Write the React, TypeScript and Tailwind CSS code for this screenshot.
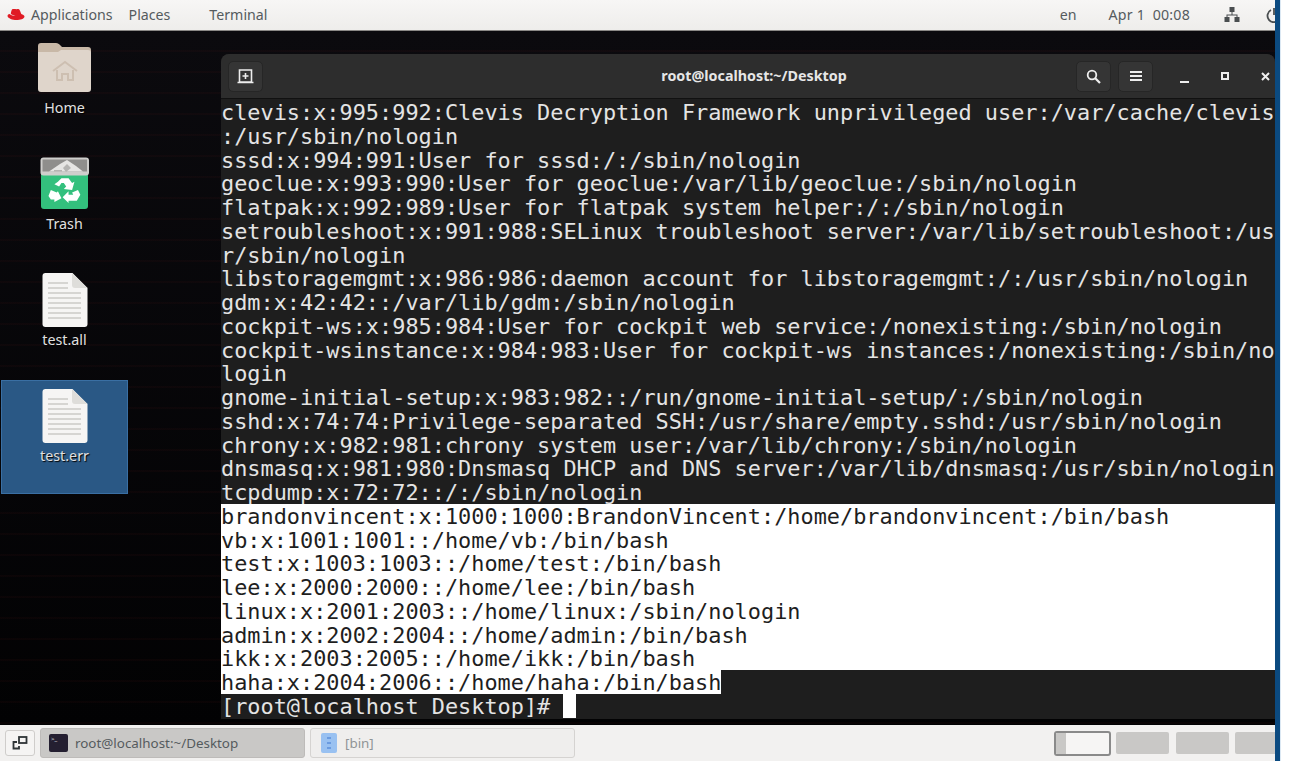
import React from "react";

const normal = [
  "clevis:x:995:992:Clevis Decryption Framework unprivileged user:/var/cache/clevis",
  ":/usr/sbin/nologin",
  "sssd:x:994:991:User for sssd:/:/sbin/nologin",
  "geoclue:x:993:990:User for geoclue:/var/lib/geoclue:/sbin/nologin",
  "flatpak:x:992:989:User for flatpak system helper:/:/sbin/nologin",
  "setroubleshoot:x:991:988:SELinux troubleshoot server:/var/lib/setroubleshoot:/us",
  "r/sbin/nologin",
  "libstoragemgmt:x:986:986:daemon account for libstoragemgmt:/:/usr/sbin/nologin",
  "gdm:x:42:42::/var/lib/gdm:/sbin/nologin",
  "cockpit-ws:x:985:984:User for cockpit web service:/nonexisting:/sbin/nologin",
  "cockpit-wsinstance:x:984:983:User for cockpit-ws instances:/nonexisting:/sbin/no",
  "login",
  "gnome-initial-setup:x:983:982::/run/gnome-initial-setup/:/sbin/nologin",
  "sshd:x:74:74:Privilege-separated SSH:/usr/share/empty.sshd:/usr/sbin/nologin",
  "chrony:x:982:981:chrony system user:/var/lib/chrony:/sbin/nologin",
  "dnsmasq:x:981:980:Dnsmasq DHCP and DNS server:/var/lib/dnsmasq:/usr/sbin/nologin",
  "tcpdump:x:72:72::/:/sbin/nologin",
];
const selected = [
  "brandonvincent:x:1000:1000:BrandonVincent:/home/brandonvincent:/bin/bash",
  "vb:x:1001:1001::/home/vb:/bin/bash",
  "test:x:1003:1003::/home/test:/bin/bash",
  "lee:x:2000:2000::/home/lee:/bin/bash",
  "linux:x:2001:2003::/home/linux:/sbin/nologin",
  "admin:x:2002:2004::/home/admin:/bin/bash",
  "ikk:x:2003:2005::/home/ikk:/bin/bash",
];

function FileIcon() {
  return (
    <svg width="46" height="54" viewBox="0 0 46 54">
      <path d="M3 0H30L45 15V51a3 3 0 0 1-3 3H3a3 3 0 0 1-3-3V3a3 3 0 0 1 3-3Z" fill="#f6f5f4" transform="translate(0.5 0)" />
      <path d="M30 0L45.5 15H33a3 3 0 0 1-3-3Z" fill="#deddda" />
      <g fill="#d6d5d2">
        <rect x="6" y="9" width="20" height="2" />
        <rect x="6" y="14" width="20" height="2" />
        <rect x="6" y="19" width="33" height="2" />
        <rect x="6" y="24" width="33" height="2" />
        <rect x="6" y="29" width="33" height="2" />
        <rect x="6" y="34" width="33" height="2" />
        <rect x="6" y="39" width="33" height="2" />
        <rect x="6" y="44" width="33" height="2" />
      </g>
    </svg>
  );
}

function HomeIcon() {
  return (
    <svg className="mb-[2px]" width="54" height="50" viewBox="0 0 54 50">
      <path d="M0 3a3 3 0 0 1 3-3H18c2 0 3 1 4 2l2 2H50a3 3 0 0 1 3 3V14H0Z" fill="#c8b8a7" />
      <path d="M0 9H20l3-2H50a3 3 0 0 1 3 3V46a3 3 0 0 1-3 3H3a3 3 0 0 1-3-3Z" fill="#dfd5cb" />
      <path d="M15 28L27 19L39 28M19 27V37H24V31H30V37H35V27" fill="none" stroke="#cdbfb1" strokeWidth="2" />
    </svg>
  );
}

function TrashIcon() {
  return (
    <svg className="mb-[2px]" width="50" height="52" viewBox="0 0 50 52">
      <rect x="1" y="14" width="47" height="38" rx="3" fill="#33c07d" />
      <rect x="0.5" y="0.5" width="48.500" height="18" rx="3" fill="#cfcecc" />
      <rect x="2.500" y="2.500" width="44.500" height="12" fill="#8f8e8c" />
      <path d="M9 14.500L20 7L27 3L36 9L43 14.500Z" fill="#e6e5e3" />
      <path d="M27 7l4 4-5 4-3-4ZM14 13h8v1.500h-8Z" fill="#b5b4b2" />
      <g fill="#fff" transform="translate(-4.500 -3.500) scale(1.180)">
        <path d="M19 24l3-3h6l3 4 2-1-2 7-7-1 2-2-2-3h-2l-2 3-4-2Z" />
        <path d="M13 31l5 2 1-1 3 6-6 3v-2h-3l-2-3Z" />
        <path d="M31 33l5-2 2 4-3 5h-7v2l-5-5 5-5v3h4Z" />
      </g>
    </svg>
  );
}

function DesktopItem({ label, children, selected }: { label: string; children: React.ReactNode; selected?: boolean }) {
  return (
    <div className={selected ? "flex h-[114px] w-[127px] flex-col items-center border border-[#3a6fa3] bg-[#2a5885] pt-[6px]" : "flex h-[114px] w-[127px] flex-col items-center border border-transparent pt-[6px]"}>
      <div className="flex h-[56px] items-end">{children}</div>
      <div className="mt-[4px] text-[14.300px] leading-[18px] text-[#e0e0e0] [text-shadow:1px_1px_1px_#000]">{label}</div>
    </div>
  );
}

function HeaderButton({ children }: { children: React.ReactNode }) {
  return (
    <div className="flex h-[31px] w-[35px] items-center justify-center rounded-[5px] border border-[#262626] bg-[#353535]">
      {children}
    </div>
  );
}

export default function App() {
  return (
    <div className="flex h-[761px] w-[1295px] overflow-hidden bg-white font-['Noto_Sans',sans-serif]">
      <div className="flex w-[1275px] flex-col">
        {/* Top bar */}
        <div className="flex h-[31px] shrink-0 items-center justify-between border-b border-[#8a8886] bg-gradient-to-b from-[#f7f6f5] to-[#eeedeb] text-[14.200px] text-[#555b5e]">
          <div className="flex items-center">
            <svg className="ml-[7px]" width="18" height="14" viewBox="0 0 18 14">
              <path d="M5 1.500C6 .5 8 1.200 9.500 1.200c1.600 0 2.300-.5 3 .5.7 1.200 1.200 3 1.800 4.200 1.500.5 3.200 1.300 3.200 2.600C17.500 11 13 12 9.500 12 5.500 12 1 10.500.5 8c0-1.300 1-2 2-2 .6.8 3 1.800 6 1.800C6 7 3.800 6.500 3.800 5.500 4 4 4.500 2.500 5 1.500Z" fill="#e01b24" />
            </svg>
            <span className="ml-[6px]">Applications</span>
            <span className="ml-[16px]">Places</span>
            <span className="ml-[39px]">Terminal</span>
          </div>
          <div className="flex items-center">
            <span>en</span>
            <span className="ml-[32px] whitespace-pre tracking-[0.2px]">Apr 1  00:08</span>
            <svg className="ml-[34px]" width="16" height="15" viewBox="0 0 16 15" fill="#4a4e50">
              <rect x="5.500" y="0" width="5" height="5" />
              <rect x="0.500" y="10" width="5" height="5" />
              <rect x="10.500" y="10" width="5" height="5" />
              <path d="M7.500 5h1v2.500H13.500V10h-1V8.500h-9V10h-1V7.500H7.500Z" />
            </svg>
            <svg className="ml-[26px] mr-[-7px]" width="16" height="16" viewBox="0 0 16 16" fill="none" stroke="#4a4e50" strokeWidth="1.800">
              <path d="M5 3a6.500 6.500 0 1 0 6 0M8 1v7" />
            </svg>
          </div>
        </div>

        {/* Desktop */}
        <div className="flex min-h-0 flex-1 bg-[repeating-linear-gradient(180deg,transparent_0px,transparent_19px,rgba(130,30,30,0.12)_20px,transparent_21px),linear-gradient(180deg,#0b0a0e,#020203)]">
          <div className="flex w-[221px] shrink-0 flex-col pl-[1px] pt-[1px]">
            <DesktopItem label="Home"><HomeIcon /></DesktopItem>
            <div className="h-[2px]" />
            <DesktopItem label="Trash"><TrashIcon /></DesktopItem>
            <div className="h-[2px]" />
            <DesktopItem label="test.all"><FileIcon /></DesktopItem>
            <div className="h-[2px]" />
            <DesktopItem label="test.err" selected><FileIcon /></DesktopItem>
          </div>

          {/* Terminal */}
          <div className="mt-[23px] mb-[6px] flex min-w-0 flex-1 flex-col overflow-hidden rounded-t-[8px] bg-[#1e1e1e]">
            <div className="grid h-[45px] shrink-0 grid-cols-[1fr_auto_1fr] items-center border-b border-[#111] bg-[#2d2d2d] pl-[7px]">
              <HeaderButton>
                <svg width="17" height="15" viewBox="0 0 17 15" fill="none" stroke="#eee" strokeWidth="1.600">
                  <path d="M2.500 1h12v12h-12ZM.500 13.500h16M8.500 4v6M5.500 7h6" />
                </svg>
              </HeaderButton>
              <span className="ml-[5px] text-[14.300px] font-bold text-[#e6e6e6]">root@localhost:~/Desktop</span>
              <div className="flex items-center justify-end">
                <HeaderButton>
                  <svg width="15" height="15" viewBox="0 0 15 15" fill="none" stroke="#eee" strokeWidth="1.800">
                    <circle cx="6" cy="6" r="4.300" />
                    <path d="M9 9l5 5" strokeWidth="2.200" />
                  </svg>
                </HeaderButton>
                <div className="w-[7px]" />
                <HeaderButton>
                  <svg width="12" height="10" viewBox="0 0 12 10" fill="#eee">
                    <rect y="0" width="12" height="2" />
                    <rect y="4" width="12" height="2" />
                    <rect y="8" width="12" height="2" />
                  </svg>
                </HeaderButton>
                <div className="ml-[27px] mt-[11px] h-[2px] w-[9px] bg-[#eee]" />
                <div className="ml-[32px] h-[8px] w-[8px] border-2 border-[#eee]" />
                <svg className="ml-[32px] mr-[5px]" width="9" height="9" viewBox="0 0 9 9" stroke="#eee" strokeWidth="2">
                  <path d="M1 1l7 7M8 1l-7 7" />
                </svg>
              </div>
            </div>
            <div className="min-h-0 flex-1 pt-[1px] font-['DejaVu_Sans_Mono',monospace] text-[21.880px] leading-[25.300px] whitespace-pre text-[#e4e4e4]">
              <div>
                {normal.map((l, i) => <div key={i} className="h-[23.760px]">{l}</div>)}
              </div>
              <div className="bg-white text-[#1e1e1e]">
                {selected.map((l, i) => <div key={i} className="h-[23.760px]">{l}</div>)}
              </div>
              <div className="h-[23.760px]">
                <span className="inline-block h-[23.760px] bg-white text-[#1e1e1e]">haha:x:2004:2006::/home/haha:/bin/bash</span>
              </div>
              <div className="flex h-[23.760px]">
                <span>[root@localhost Desktop]#</span>
                <span className="ml-[13px] h-[23.760px] w-[13.200px] bg-white" />
              </div>
            </div>
          </div>
        </div>

        {/* Bottom bar */}
        <div className="flex h-[36px] shrink-0 items-center bg-[#f2f1f0] pl-[5px] text-[13.400px] text-[#555b5e]">
          <div className="flex h-[26px] w-[30px] items-center justify-center rounded-[3px] border border-[#cfcdcb] bg-[#f5f4f3]">
            <svg width="16" height="14" viewBox="0 0 16 14" fill="none" stroke="#2e3436" strokeWidth="1.800">
              <rect x="7" y="1" width="7.500" height="6" />
              <path d="M5 6H1.500v6.500H7V10" />
            </svg>
          </div>
          <div className="ml-[5px] flex h-[30px] w-[265px] items-center rounded-[3px] border border-[#bdbbb9] bg-[#c9c8c6] pl-[8px]">
            <div className="relative h-[18px] w-[19px] rounded-[2px] bg-[#241f31]">
              <span className="absolute left-[2px] top-[1px] text-[6px] leading-[8px] text-white">&gt;_</span>
            </div>
            <span className="ml-[7px] mt-[1px]">root@localhost:~/Desktop</span>
          </div>
          <div className="ml-[5px] flex h-[30px] w-[265px] items-center rounded-[3px] border border-[#d5d3d1] bg-[#efeeed] pl-[10px] text-[#8f9496]">
            <div className="flex h-[20px] w-[16px] flex-col items-center justify-center gap-[3px] rounded-[2px] bg-[#99c1f1]">
              <div className="h-[2px] w-[4px] bg-[#6a9be0]" />
              <div className="h-[2px] w-[4px] bg-[#6a9be0]" />
              <div className="h-[2px] w-[4px] bg-[#6a9be0]" />
            </div>
            <span className="ml-[8px] mt-[1px]">[bin]</span>
          </div>
          <div className="ml-auto flex items-center">
            <div className="flex h-[25px] w-[57px] overflow-hidden rounded-[3px] border-2 border-[#8a8a8a] bg-[#f6f5f4]">
              <div className="h-full w-[10px] bg-[#c9c8c6]" />
            </div>
            <div className="ml-[5px] h-[22px] w-[53px] rounded-[2px] bg-[#c9c8c6]" />
            <div className="ml-[7px] h-[22px] w-[53px] rounded-[2px] bg-[#c9c8c6]" />
            <div className="ml-[6px] h-[22px] w-[40px] rounded-l-[2px] bg-[#c9c8c6]" />
          </div>
        </div>
      </div>
      <div className="w-[5px] shrink-0 bg-[#0b4a80]" />
      <div className="w-[1px] shrink-0 bg-[#dbe8f3]" />
      <div className="flex-1 bg-white" />
    </div>
  );
}
